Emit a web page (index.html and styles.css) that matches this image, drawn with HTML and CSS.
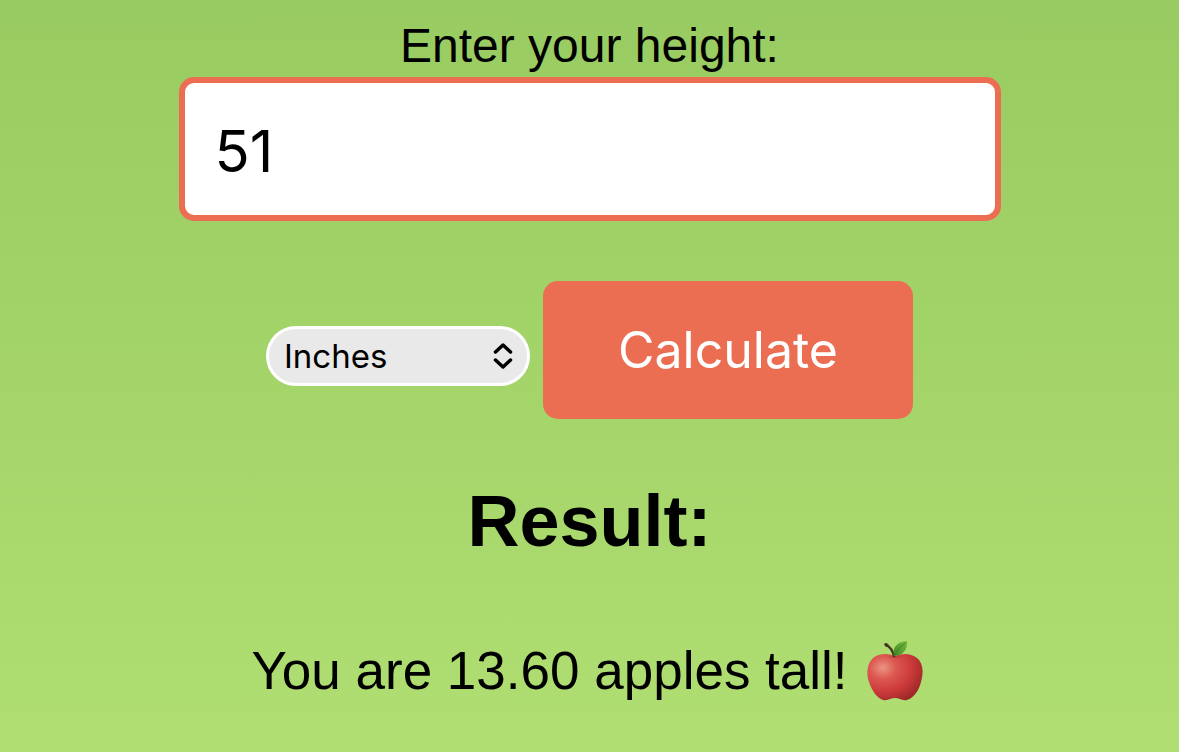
FILE: index.html
```
<!DOCTYPE html>
<html lang="en">
<head>
  <meta charset="utf-8">
  <meta name="viewport" content="width=device-width, initial-scale=1">
  <title>Height in apples</title>
  <link rel="stylesheet" href="styles.css">
</head>
<body class="page">
  <main class="calculator">
    <form class="form">
      <label class="label" for="height">Enter your height:</label>
      <input class="height-input" id="height" type="text" inputmode="decimal" value="51">
      <div class="actions">
        <div class="unit">
          <select class="unit-select" aria-label="Unit">
            <option selected>Inches</option>
            <option>Centimeters</option>
          </select>
          <svg class="unit-arrows" viewBox="0 0 20 28" aria-hidden="true">
            <path d="M2.500 10 10 3 17.500 10M2.500 18 10 25 17.500 18"/>
          </svg>
        </div>
        <button class="calculate" type="button">Calculate</button>
      </div>
    </form>
    <h2 class="result-title">Result:</h2>
    <p class="result">
      <span>You are 13.60 apples tall!</span>
      <svg class="apple" viewBox="0 0 58 62" role="img" aria-label="Red apple">
        <defs>
          <radialGradient id="skin" cx="28%" cy="30%" r="80%">
            <stop offset="0" stop-color="#ec9584"/>
            <stop offset=".3" stop-color="#dc5850"/>
            <stop offset=".65" stop-color="#cc3a3a"/>
            <stop offset="1" stop-color="#9c2828"/>
          </radialGradient>
          <linearGradient id="leaf" x1="0" y1="1" x2="1" y2="0">
            <stop offset="0" stop-color="#3f8527"/>
            <stop offset="1" stop-color="#79bd3c"/>
          </linearGradient>
        </defs>
        <path fill="url(#skin)" d="M29 16C22 13 13 13 7 18C1 24 0 33 3 42C6 51 11 58 17 60C22 61 25 58 29 58C33 58 36 61 41 60C48 58 53 50 55 42C58 32 57 23 51 18C45 13 36 13 29 16Z"/>
        <path fill="#8d2222" opacity=".45" d="M20 15Q29 21 38 15Q33 18 29 16Q25 18 20 15Z"/>
        <path fill="none" stroke="#49351f" stroke-width="2.500" stroke-linecap="round" d="M20.500 5Q26 8 28 16"/>
        <ellipse cx="20.500" cy="5" rx="2.500" ry="1.700" fill="#49351f" transform="rotate(35 20.500 5)"/>
        <path fill="url(#leaf)" d="M28 16C26 6 32 2 41 1C42 9 37 16 28 16Z"/>
        <path fill="none" stroke="#347522" stroke-width=".8" d="M28 16Q32 8 39 3"/>
      </svg>
    </p>
  </main>
</body>
</html>
```

FILE: styles.css
```
* {
  box-sizing: border-box;
}

.page {
  margin: 0;
  min-height: 100vh;
  background: linear-gradient(#98cb61, #b0de72);
  color: #000;
  font-family: "Liberation Sans", Arial, sans-serif;
}

.calculator {
  padding: 18px 16px 0;
  text-align: center;
}

.form {
  display: flex;
  flex-direction: column;
  align-items: center;
}

.label {
  font-size: 48px;
  line-height: 56px;
  margin-bottom: 3px;
}

.height-input {
  width: 100%;
  max-width: 822px;
  padding: 32px 30px 28px;
  border: 6px solid #ec6e52;
  border-radius: 15px;
  background: #fff;
  color: #000;
  font-family: Inter, sans-serif;
  font-size: 58px;
  line-height: 72px;
}

.actions {
  display: flex;
  flex-wrap: wrap;
  justify-content: center;
  align-items: baseline;
  gap: 13px;
  margin-top: 60px;
}

.unit {
  position: relative;
}

.unit-select {
  appearance: none;
  width: 264px;
  height: 60px;
  padding: 0 56px 0 15px;
  border: 3px solid #fff;
  border-radius: 30px;
  background: #e9e9e9;
  color: #000;
  font-family: Inter, sans-serif;
  font-size: 33px;
}

.unit-arrows {
  position: absolute;
  top: 16px;
  right: 17px;
  width: 20px;
  height: 28px;
  fill: none;
  stroke: #000;
  stroke-width: 3.5;
  stroke-linecap: round;
  stroke-linejoin: round;
  pointer-events: none;
}

.calculate {
  padding: 36px 75px;
  border: 0;
  border-radius: 15px;
  background: #ec6e52;
  color: #fff;
  font-family: Inter, sans-serif;
  font-size: 50px;
  line-height: 66px;
}

.result-title {
  margin: 60px 0 77px;
  font-size: 72px;
  line-height: 84px;
}

.result {
  display: flex;
  justify-content: center;
  align-items: center;
  gap: 18px;
  margin: 0;
  padding: 0 4px 48px 0;
  font-size: 53px;
  line-height: 62px;
}

.apple {
  flex: none;
  width: 58px;
  height: 62px;
}
```
